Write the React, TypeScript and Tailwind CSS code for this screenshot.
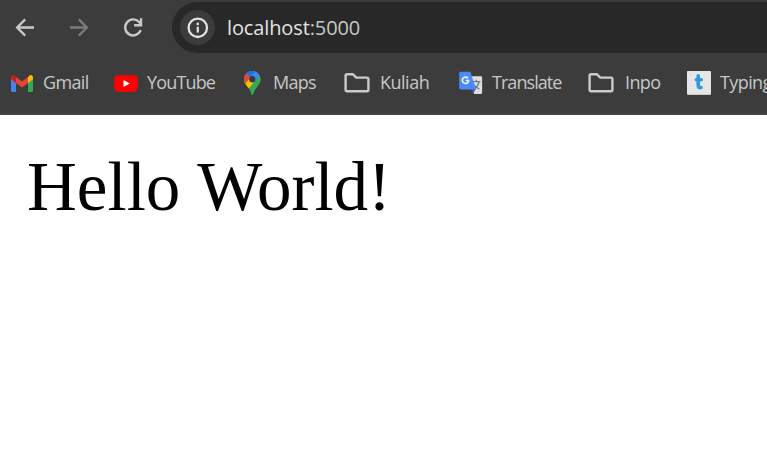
import type { ReactNode } from "react";

function BackIcon({ flip = false }: { flip?: boolean }) {
  return (
    <svg width="20" height="20" viewBox="0 0 20 20" fill="none" stroke={flip ? "#7b7b7b" : "#c9c9c9"} strokeWidth="2.3" className={flip ? "-scale-x-100" : ""}>
      <path d="M19 9.500H2.500M10.200 1.400L2.100 9.500l8.100 8.100" />
    </svg>
  );
}

function ReloadIcon() {
  return (
    <svg width="20" height="20" viewBox="0 0 20 20" fill="none" stroke="#c9c9c9" strokeWidth="2.400">
      <path d="M17.700 12.200A8 8 0 1 1 16.100 4L18 6" />
      <path d="M18 .3v6.900h-6.900" />
    </svg>
  );
}

function InfoIcon() {
  return (
    <svg width="22" height="22" viewBox="0 0 22 22" fill="none">
      <circle cx="10.800" cy="10.800" r="9.200" stroke="#e3e3e3" strokeWidth="2.300" />
      <path d="M10.800 9.700v5.900" stroke="#e3e3e3" strokeWidth="2.200" />
      <circle cx="10.800" cy="6.900" r="1.300" fill="#e3e3e3" />
    </svg>
  );
}

function GmailIcon() {
  return (
    <svg width="22" height="17" viewBox="0 0 22 17">
      <path d="M0 3v12.3Q0 17 1.7 17H5V7z" fill="#4285f4" />
      <path d="M17 7v10h3.3q1.7 0 1.7-1.7V3z" fill="#34a853" />
      <path d="M17 2.1V8l5-3.8V2.5C22 .4 19.7-.8 18 .9z" fill="#fbbc04" />
      <path d="M5 8V2.1l6 4.5 6-4.5V8l-6 4.6z" fill="#ea4335" />
      <path d="M0 2.5v1.700L5 8V2.1L4 .9C2.3-.8 0 .4 0 2.5z" fill="#c5221f" />
    </svg>
  );
}

function YouTubeIcon() {
  return (
    <svg width="24" height="17" viewBox="0 0 24 17">
      <path d="M3 .5Q12-.4 21 .5q2.3.2 2.6 2.5.7 5.5 0 11-.3 2.3-2.6 2.5-9 .9-18 0Q.7 16.300.4 14q-.7-5.500 0-11Q.7.7 3 .5z" fill="#f00" />
      <path d="M9.500 4.900v7.200L15.800 8.500z" fill="#fff" />
    </svg>
  );
}

function MapsIcon() {
  return (
    <svg width="17" height="24" viewBox="0 0 17 24">
      <defs>
        <clipPath id="pin">
          <path d="M8.300 0A8.100 8.100 0 0 1 16.500 8.300c0 5.200-4.700 7.700-6.500 12.300L9 23.200q-.7 1.500-1.400 0L6.600 20.500C4.800 15.900 0 13.500 0 8.300A8.100 8.100 0 0 1 8.300 0z" />
        </clipPath>
      </defs>
      <g clipPath="url(#pin)">
        <path d="M0 0h17v24H0z" fill="#34a853" />
        <path d="M2.200 2.500L5 0h12v4L8.500 13.500V8z" fill="#4285f4" />
        <path d="M2.200 2.500L4 0h7.500L6.300 6.500z" fill="#1a73e8" />
        <path d="M0 10.500L5.700 6.400 8.500 12 11 11l-8 9z" fill="#fbbc04" />
        <path d="M0 4l2.100-1.700 4.500 4L1 13z" fill="#ea4335" />
        <path d="M17 3.500L3.500 19v5H17z" fill="#34a853" />
      </g>
      <circle cx="8.300" cy="8.200" r="3.100" fill="#3c3c3c" />
    </svg>
  );
}

function FolderIcon() {
  return (
    <svg width="26" height="20" viewBox="0 0 26 20" fill="none" stroke="#cbcbcb" strokeWidth="2.400" strokeLinejoin="round">
      <path d="M3 1.300h6l3.300 3.300H23q1.400 0 1.400 1.400v10.800q0 1.400-1.400 1.400H3q-1.400 0-1.400-1.400V2.700Q1.600 1.300 3 1.300z" />
    </svg>
  );
}

function TranslateIcon() {
  return (
    <svg width="24" height="24" viewBox="0 0 24 24">
      <path d="M11 5.200h10.800q1.300 0 1.300 1.300v15q0 1.400-1.300 1.400H15z" fill="#dedede" />
      <path d="M13 10.700h8.500M17.300 8.700v2M14 12q2 4.500 6.500 6M20 11q-1 4.500-5.500 7.500" fill="none" stroke="#687b82" strokeWidth="1.300" />
      <path d="M12 18h5l-3.300 4.500z" fill="#304fc5" />
      <path d="M1.600.7h9.800l5.700 17.700H1.600Q.2 18.400.2 17V2.100Q.2.700 1.600.7z" fill="#4c8bf5" />
      <path d="M9 7.300A3.200 3.200 0 1 0 9.700 9.500H6.700" fill="none" stroke="#eef3ff" strokeWidth="1.600" />
    </svg>
  );
}

function TypingIcon() {
  return (
    <svg width="24" height="24" viewBox="0 0 24 24">
      <rect width="24" height="24" rx="1.300" fill="#c9c9c9" />
      <rect width="24" height="23" rx="1.300" fill="#e6e6e6" />
      <path d="M11.200 4.800v9.700q0 2.400 2.300 2.100h.6M9.300 8.700h5" fill="none" stroke="#2f98df" strokeWidth="3.500" strokeLinecap="round" />
    </svg>
  );
}

function Bookmark({ icon, label, slot, gap, tracking }: { icon: ReactNode; label: string; slot: string; gap: string; tracking: string }) {
  return (
    <div className={`flex h-6 shrink-0 items-center ${slot} ${gap}`}>
      <span className="shrink-0">{icon}</span>
      <span className={`whitespace-nowrap pb-0.5 text-[18px] leading-6 text-[#c7c7c7] ${tracking}`}>{label}</span>
    </div>
  );
}

export default function App() {
  return (
    <div className="h-[474px] w-[767px] overflow-hidden bg-white">
      <header className="h-[115px] border-b-2 border-[#474547] bg-[#3c3c3c] pt-0.5 font-['Open_Sans',sans-serif]">
        <div className="flex h-[51px] items-center">
          <nav className="flex w-[172px] shrink-0 items-center gap-[34px] pl-[15px]">
            <BackIcon />
            <BackIcon flip />
            <ReloadIcon />
          </nav>
          <div className="flex h-[51px] flex-1 items-center rounded-l-full bg-[#282828] pl-2">
            <div className="flex size-[35px] items-center justify-center rounded-full bg-[#3c3c3c]">
              <InfoIcon />
            </div>
            <div className="ml-3 whitespace-nowrap text-[20px] leading-6 tracking-[-0.120px] text-[#e3e3e3]">
              localhost<span className="text-[#c7c7c7]">:5000</span>
            </div>
          </div>
        </div>
        <div className="flex h-[60px] items-center overflow-hidden pl-[11px]">
          <Bookmark icon={<GmailIcon />} label="Gmail" slot="w-[103px]" gap="gap-2.5" tracking="tracking-[-0.650px]" />
          <Bookmark icon={<YouTubeIcon />} label="YouTube" slot="w-[130px]" gap="gap-[9px]" tracking="tracking-[-0.850px]" />
          <Bookmark icon={<MapsIcon />} label="Maps" slot="w-[100px]" gap="gap-3" tracking="tracking-[-0.700px]" />
          <Bookmark icon={<FolderIcon />} label="Kuliah" slot="w-[115px]" gap="gap-2.5" tracking="tracking-[-0.500px]" />
          <Bookmark icon={<TranslateIcon />} label="Translate" slot="w-[129px]" gap="gap-[9px]" tracking="tracking-[-0.950px]" />
          <Bookmark icon={<FolderIcon />} label="Inpo" slot="w-[99px]" gap="gap-[11px]" tracking="tracking-[-0.600px]" />
          <Bookmark icon={<TypingIcon />} label="Typing" slot="w-[120px]" gap="gap-[9px]" tracking="tracking-[-0.600px]" />
        </div>
      </header>
      <main className="pl-[27px] pt-8 font-['Liberation_Serif',serif] text-[69px] leading-[80px] text-black [word-spacing:1px]">Hello World!</main>
    </div>
  );
}
